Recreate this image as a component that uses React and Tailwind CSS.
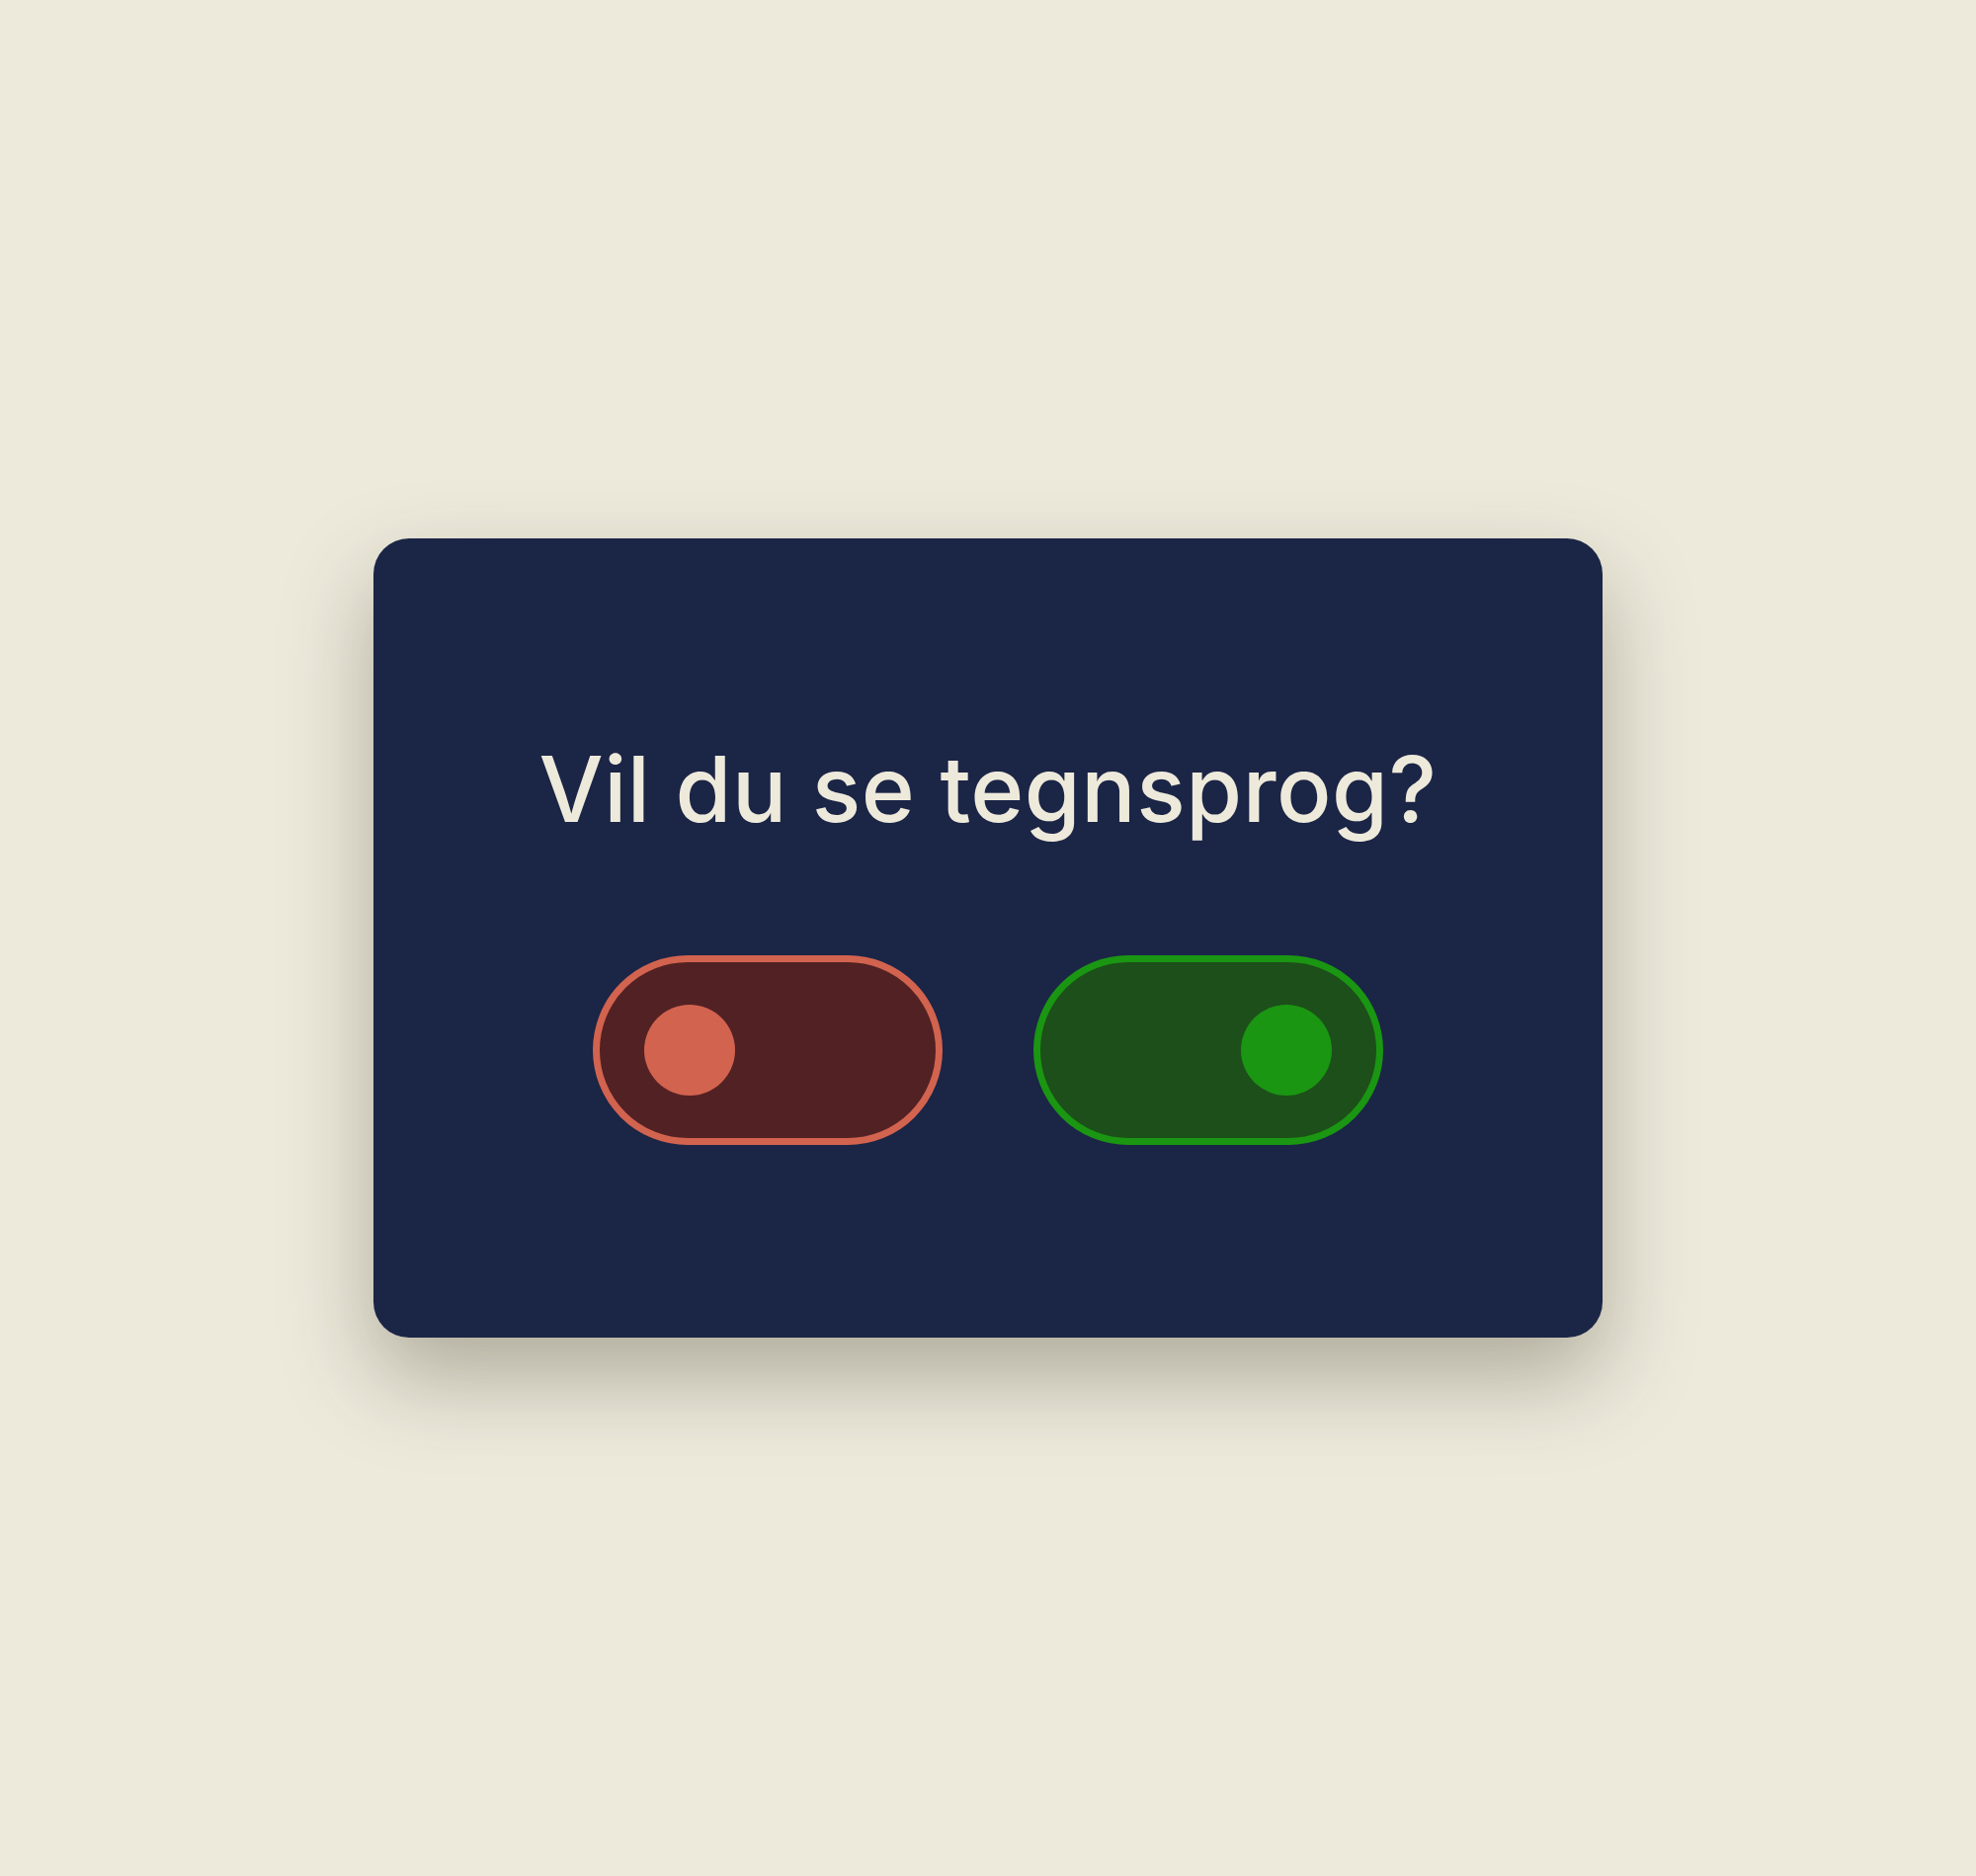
import React from 'react';

const Toggle = ({ on }) => {
  // off = red with knob left, on = green with knob right
  const track = on
    ? 'border-[#1a9612] bg-[#1d4f1a] justify-end'
    : 'border-[#d2634f] bg-[#522124] justify-start';
  const knob = on ? 'bg-[#1a9612]' : 'bg-[#d2634f]';

  return (
    <button
      type="button"
      className={`flex items-center w-[354px] h-[192px] rounded-full border-[7px] px-[45px] ${track}`}
    >
      <span className={`block w-[92px] h-[92px] rounded-full ${knob}`} />
    </button>
  );
};

export default function App() {
  return (
    <div className="min-h-[1899px] w-full bg-[#edeadc] flex items-center justify-center">
      <div className="w-[1244px] h-[809px] rounded-[36px] bg-[#1b2546] shadow-[0_40px_90px_rgba(60,55,35,0.35)] flex flex-col items-center pt-[199px]">
        <h1
          className="text-[#eeeadb] text-[92px] leading-[110px] font-medium tracking-[0.5px]"
          style={{ fontFamily: 'Inter, Roboto, sans-serif' }}
        >
          Vil du se tegnsprog?
        </h1>
        <div className="flex gap-[92px] mt-[113px]">
          <Toggle on={false} />
          <Toggle on={true} />
        </div>
      </div>
    </div>
  );
}
